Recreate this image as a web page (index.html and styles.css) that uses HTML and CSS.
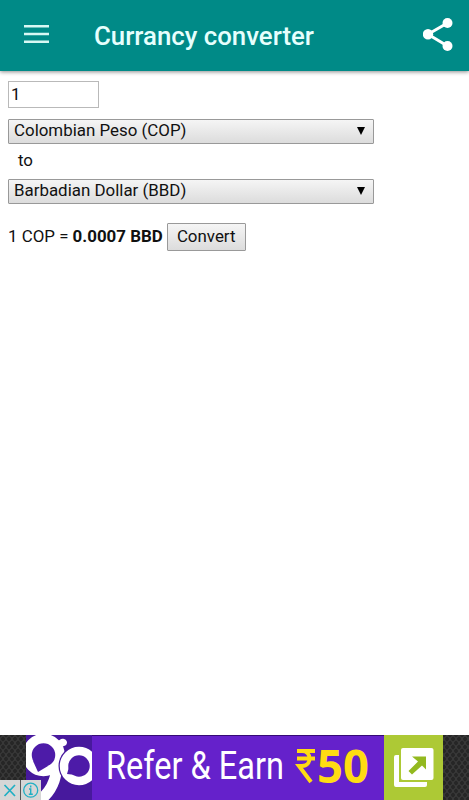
FILE: index.html
```
<!DOCTYPE html>
<html lang="en">
<head>
    <meta charset="UTF-8">
    <meta name="viewport" content="width=device-width, initial-scale=1.0">
    <title>Currancy converter</title>
    <link rel="stylesheet" href="styles.css">
</head>
<body>

<header class="toolbar">
    <svg class="menu-icon" width="25" height="18" viewBox="0 0 25 18">
        <path d="M0 1.3h25M0 9h25M0 16.7h25" stroke="#d8f8f4" stroke-width="2.6"/>
    </svg>
    <h1>Currancy converter</h1>
    <svg class="share-icon" width="30" height="33" viewBox="0 0 30 33">
        <path d="M24.500 5L5 16.300 24.500 28" fill="none" stroke="#fff" stroke-width="3"/>
        <circle cx="24.500" cy="5" r="5" fill="#fff"/>
        <circle cx="5" cy="16.300" r="5.200" fill="#fff"/>
        <circle cx="24.500" cy="28" r="5" fill="#fff"/>
    </svg>
</header>

<main class="converter">
    <input class="amount" type="text" value="1">
    <div class="select-box">
        <select class="currency"><option>Colombian Peso (COP)</option></select>
        <svg class="arrow" width="8" height="8" viewBox="0 0 8 8"><path d="M0 0h8L4 8z"/></svg>
    </div>
    <div class="to">to</div>
    <div class="select-box">
        <select class="currency"><option>Barbadian Dollar (BBD)</option></select>
        <svg class="arrow" width="8" height="8" viewBox="0 0 8 8"><path d="M0 0h8L4 8z"/></svg>
    </div>
    <div class="result">
        <span class="rate">1 COP = <b>0.0007 BBD</b></span>
        <button class="convert">Convert</button>
    </div>
</main>

<footer class="ad">
    <div class="ad-banner">
        <svg class="ad-logo" width="66" height="65" viewBox="0 0 66 65">
            <path d="M0 0h66v65H0z" fill="#47199d"/>
            <path d="M32 20c-1 19-3 34-19 46" fill="none" stroke="#fff" stroke-width="11"/>
            <circle cx="17.500" cy="20" r="16.500" fill="#4d1ba8" stroke="#fff" stroke-width="9.500"/>
            <path d="M30 6c3 1 4-3 8-2 4 1 4 6 0 7l-5 2z" fill="#fff"/>
            <path d="M7 26l5 11 10-6z" fill="#4d1ba8"/>
            <circle cx="53" cy="31" r="20.500" fill="#47199d"/>
            <circle cx="53" cy="31" r="15" fill="#4d1ba8" stroke="#fff" stroke-width="8.500"/>
            <path d="M43 32l-2 7 9 1z" fill="#4d1ba8"/>
        </svg>
        <svg class="ad-text" width="292" height="65" viewBox="0 0 292 65">
            <text class="refer" x="14" y="44" textLength="178" lengthAdjust="spacingAndGlyphs">Refer &amp; Earn</text>
            <path d="M205 16h18M205 23.500h18M206 16h4c10 0 10 15 0 15h-3l12 16" fill="none" stroke="#ffdc12" stroke-width="4"/>
            <text class="price" x="225" y="48" textLength="52" lengthAdjust="spacingAndGlyphs">50</text>
        </svg>
        <div class="ad-open">
            <svg width="40" height="40" viewBox="0 0 40 40">
                <path d="M2 7h3v27h28v3q0 2-2 2H2q-2 0-2-2V9q0-2 2-2z" fill="#fff"/>
                <rect x="7" y="0" width="32.500" height="32" rx="2" fill="#fff"/>
                <path d="M18 8.500h14v13l-4-4-10 9-3.500-3.500 9.500-9.500z" fill="#93b91f"/>
            </svg>
        </div>
    </div>
    <div class="ad-controls">
        <svg width="20" height="20" viewBox="0 0 20 20"><path d="M4.500 5l10.500 11M15 5L4.500 16" stroke="#1fafc4" stroke-width="1.700"/></svg>
        <svg width="20" height="20" viewBox="0 0 20 20">
            <circle cx="9.700" cy="10.200" r="7" fill="none" stroke="#1fafc4" stroke-width="1.300"/>
            <path d="M9.700 5.500v2M8 9h1.700v5M7.800 14.300h4" fill="none" stroke="#1fafc4" stroke-width="1.400"/>
        </svg>
    </div>
</footer>

</body>
</html>
```
FILE: styles.css
```
* {
    box-sizing: border-box;
}
body {
    margin: 0;
    height: 100vh;
    display: flex;
    flex-direction: column;
    background: #fff;
    color: #111;
    font-family: Roboto, sans-serif;
    font-size: 16.9px;
    overflow: hidden;
}
.toolbar {
    display: flex;
    align-items: center;
    height: 71px;
    padding: 0 16px 0 24px;
    background: #008a87;
    box-shadow: 0 1px 4px rgba(0,0,0,0.45);
}
.menu-icon {
    margin-top: -3px;
}
.toolbar h1 {
    margin: 0 auto 0 45px;
    color: #e6fffd;
    font-size: 25.8px;
    font-weight: 500;
    line-height: 30px;
}
.share-icon {
    margin-top: -2px;
}
.converter {
    flex: 1;
    padding: 10px 8px;
}
.amount {
    display: block;
    width: 91px;
    height: 27px;
    margin-bottom: 11px;
    padding: 0 2px 2px;
    border: 1px solid #b9b9b9;
    color: #111;
    font: inherit;
}
.select-box {
    position: relative;
    width: 366px;
    height: 25px;
}
.currency {
    display: block;
    width: 100%;
    height: 25px;
    padding: 0 5px 3px;
    appearance: none;
    border: 1px solid #999;
    border-radius: 1px;
    background: linear-gradient(#f5f5f5, #dcdcdc);
    color: #111;
    font: inherit;
    line-height: 20px;
}
.arrow {
    position: absolute;
    top: 8px;
    right: 9px;
}
.to {
    height: 35px;
    padding-left: 10px;
    line-height: 33px;
}
.result {
    display: flex;
    align-items: center;
    gap: 4px;
    margin-top: 19px;
}
.rate {
    white-space: nowrap;
    margin-top: -3px;
}
.convert {
    width: 79px;
    height: 28px;
    padding: 0 0 3px;
    border: 1px solid #999;
    border-radius: 1px;
    background: linear-gradient(#f5f5f5, #dcdcdc);
    color: #111;
    font: inherit;
}
.ad {
    position: relative;
    height: 65px;
    padding-left: 26px;
    background-color: #383838;
    background-image: radial-gradient(#262626 1.5px, transparent 2px), radial-gradient(#262626 1.5px, transparent 2px);
    background-size: 6px 8px;
    background-position: 0 0, 3px 4px;
}
.ad-banner {
    display: flex;
    width: 417px;
    height: 65px;
    background: #6521cb;
    box-shadow: inset 0 1px #350a75;
}
.refer {
    fill: #fff;
    font-family: Roboto, sans-serif;
    font-size: 38px;
    font-weight: 400;
}
.price {
    fill: #ffdc12;
    font-family: "Open Sans", sans-serif;
    font-size: 46px;
    font-weight: 700;
}
.ad-open {
    display: flex;
    align-items: center;
    justify-content: center;
    width: 59px;
    height: 65px;
    background: #adc935;
}
.ad-controls {
    position: absolute;
    left: 0;
    bottom: 0;
    display: flex;
    gap: 1px;
    background: #555;
}
.ad-controls svg {
    display: block;
    background: #d6d6d6;
}
```
